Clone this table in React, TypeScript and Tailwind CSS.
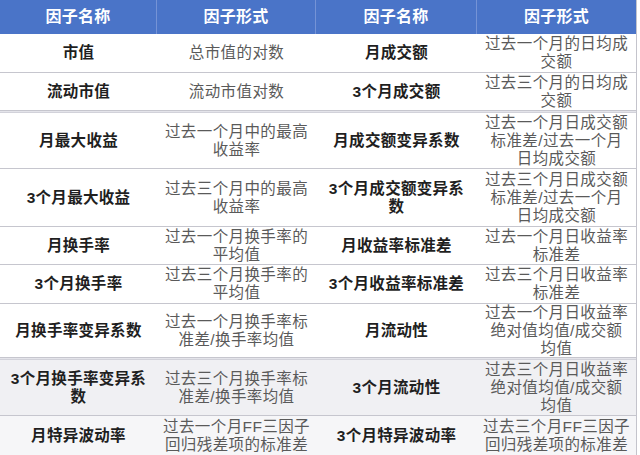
import React from "react";

type Row = { h: string; bg: string; a: string[]; b: string[]; c: string[]; d: string[] };

const rows: Row[] = [
  { h: "h-[39px]", bg: "bg-white", a: ["市值"], b: ["总市值的对数"], c: ["月成交额"], d: ["过去一个月的日均成", "交额"] },
  { h: "h-[38px]", bg: "bg-white", a: ["流动市值"], b: ["流动市值对数"], c: ["3个月成交额"], d: ["过去三个月的日均成", "交额"] },
  { h: "h-[56px]", bg: "bg-white", a: ["月最大收益"], b: ["过去一个月中的最高", "收益率"], c: ["月成交额变异系数"], d: ["过去一个月日成交额", "标准差/过去一个月", "日均成交额"] },
  { h: "h-[58px]", bg: "bg-white", a: ["3个月最大收益"], b: ["过去三个月中的最高", "收益率"], c: ["3个月成交额变异系", "数"], d: ["过去三个月日成交额", "标准差/过去一个月", "日均成交额"] },
  { h: "h-[38px]", bg: "bg-white", a: ["月换手率"], b: ["过去一个月换手率的", "平均值"], c: ["月收益率标准差"], d: ["过去一个月日收益率", "标准差"] },
  { h: "h-[39px]", bg: "bg-white", a: ["3个月换手率"], b: ["过去三个月换手率的", "平均值"], c: ["3个月收益率标准差"], d: ["过去三个月日收益率", "标准差"] },
  { h: "h-[54px]", bg: "bg-white", a: ["月换手率变异系数"], b: ["过去一个月换手率标", "准差/换手率均值"], c: ["月流动性"], d: ["过去一个月日收益率", "绝对值均值/成交额", "均值"] },
  { h: "h-[56px]", bg: "bg-[#f0f0f3]", a: ["3个月换手率变异系", "数"], b: ["过去三个月换手率标", "准差/换手率均值"], c: ["3个月流动性"], d: ["过去三个月日收益率", "绝对值均值/成交额", "均值"] },
  { h: "h-[40px]", bg: "bg-[#f6f6f8]", a: ["月特异波动率"], b: ["过去一个月FF三因子", "回归残差项的标准差"], c: ["3个月特异波动率"], d: ["过去三个月FF三因子", "回归残差项的标准差"] },
];

const font = { fontFamily: '"Liberation Sans", "Noto Sans CJK SC", sans-serif' };

function Cell({ lines, bold }: { lines: string[]; bold?: boolean }) {
  return (
    <div className="flex flex-col items-center justify-center text-center">
      {lines.map((l, i) => (
        <div
          key={i}
          className={
            bold
              ? "whitespace-nowrap text-[15.5px] leading-[18px] tracking-[0.3px] font-bold text-[#1f1f1f]"
              : "whitespace-nowrap text-[15.5px] leading-[18px] tracking-[0.4px] text-[#5a5a5a]"
          }
        >
          {l}
        </div>
      ))}
    </div>
  );
}

export default function App() {
  return (
    <div className="w-[640px] h-[455px] overflow-hidden bg-white" style={font}>
      <div className="w-[637px] border-r border-[#c4c4cc]">
        <div className="grid grid-cols-[157px_159px_161px_159px] h-[34px] bg-[#4a74c8] text-white text-[16px] tracking-[0.3px] font-bold">
          <div className="flex items-center justify-center border-r border-[#7593d6]">因子名称</div>
          <div className="flex items-center justify-center border-r border-[#7593d6]">因子形式</div>
          <div className="flex items-center justify-center border-r border-[#7593d6]">因子名称</div>
          <div className="flex items-center justify-center">因子形式</div>
        </div>
        {rows.map((r, i) => (
          <React.Fragment key={i}>
            <div className={`grid grid-cols-[157px_159px_161px_159px] border-b border-[#c6c6ce] ${r.h} ${r.bg}`}>
              <Cell lines={r.a} bold />
              <Cell lines={r.b} />
              <Cell lines={r.c} bold />
              <Cell lines={r.d} />
            </div>
            {(i === 1 || i === 6) && <div className="h-[2px] bg-[#e4e4ea] border-b border-[#d2d2da]" />}
          </React.Fragment>
        ))}
      </div>
    </div>
  );
}
